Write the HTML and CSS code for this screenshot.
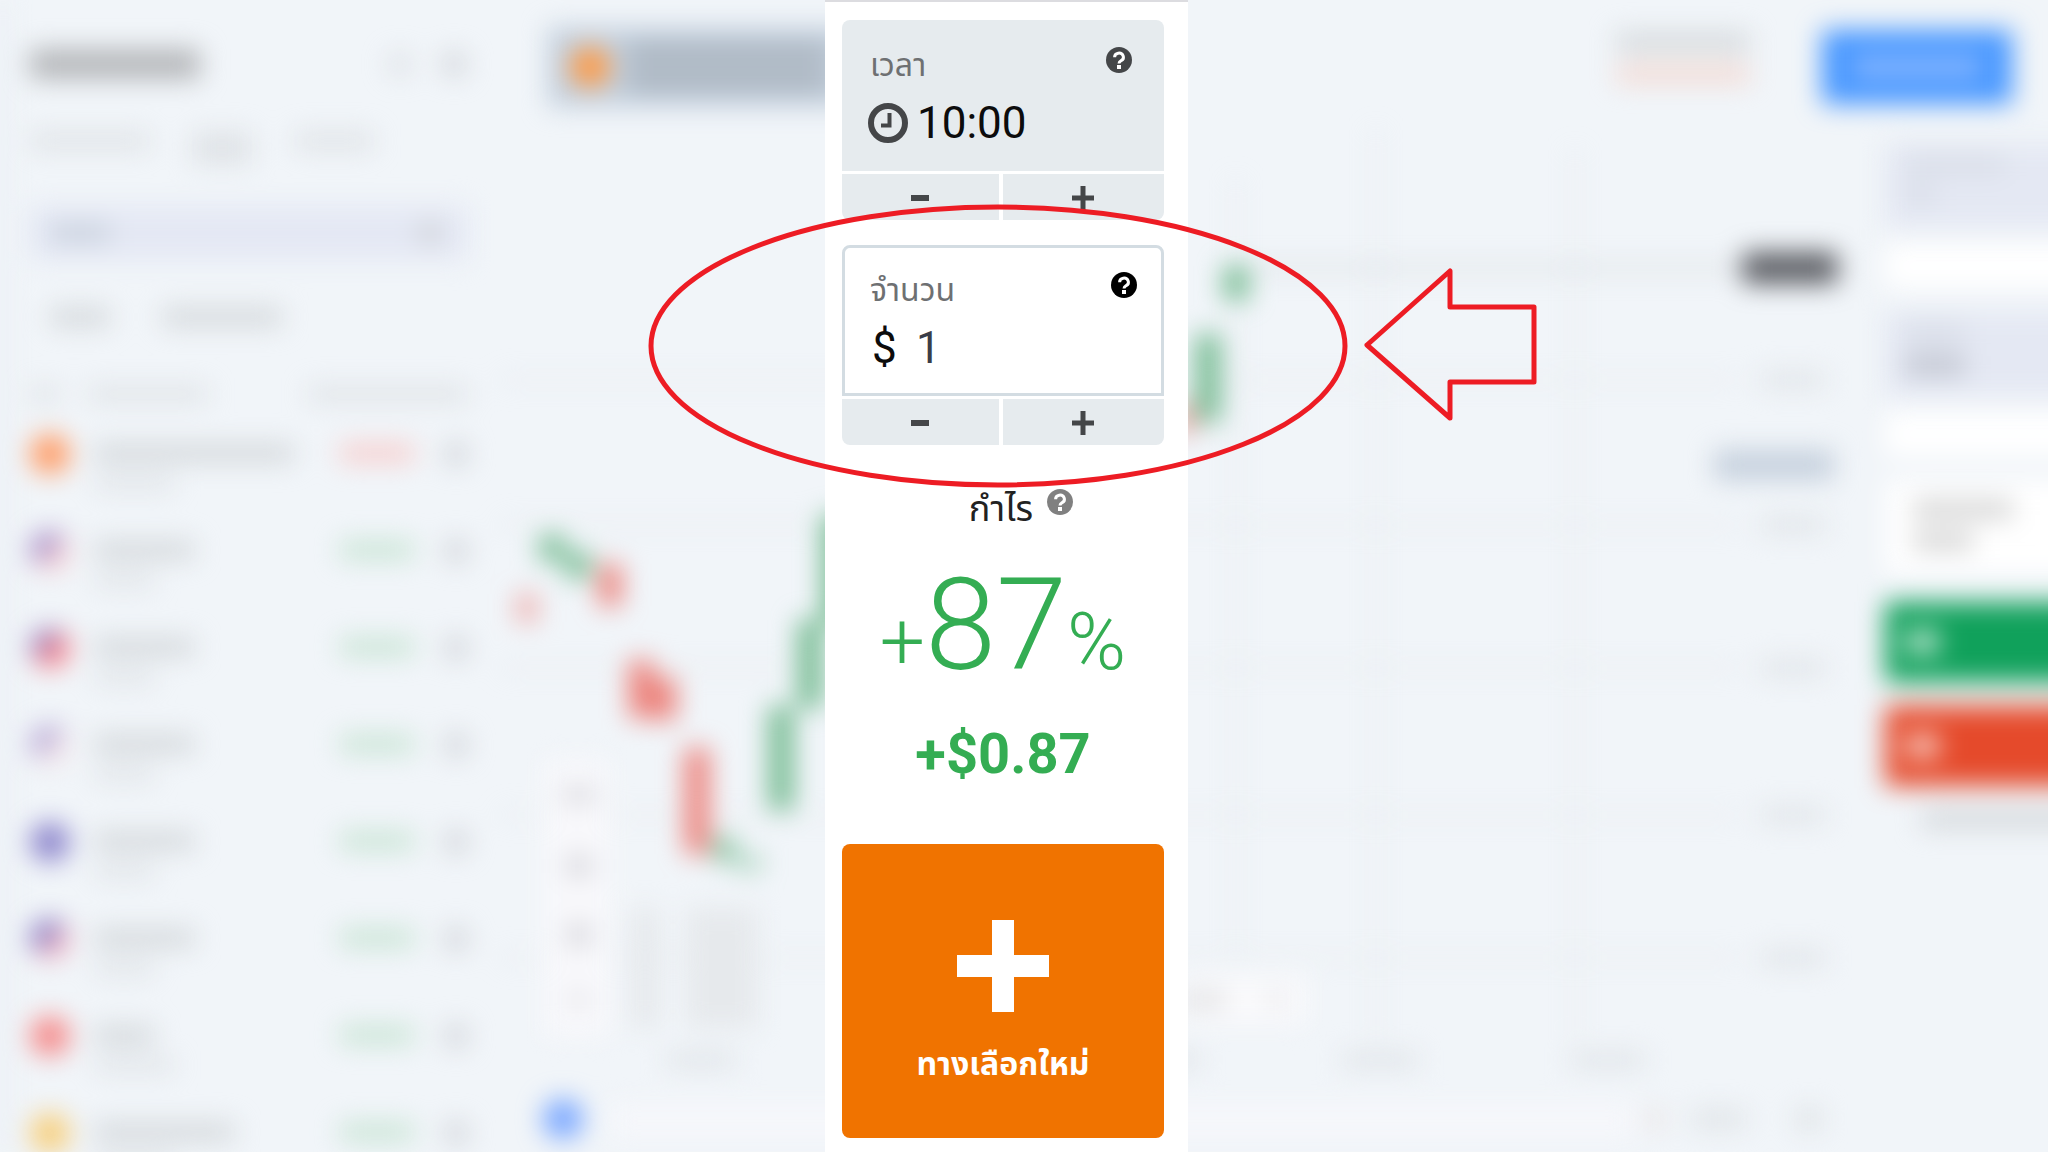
FILE: index.html
```html
<!DOCTYPE html>
<html lang="th">
<head>
  <meta charset="UTF-8" />
  <meta name="viewport" content="width=device-width, initial-scale=1.0" />
  <title>จำนวน</title>
  <link rel="stylesheet" href="styles.css">
</head>
<body>

  <svg class="defs" aria-hidden="true">
    <symbol id="help" viewBox="0 0 26 26">
      <circle cx="13" cy="13" r="13" fill="currentColor" />
      <path class="help-mark" d="M8.6 10.2a4.400 4 0 1 1 6.600 3.400c-1.600 1-2.200 1.500-2.200 3" />
      <rect class="help-dot" x="11" y="18" width="4" height="4" />
    </symbol>
    <symbol id="minus" viewBox="0 0 24 24"><path d="M3 12h18" stroke="currentColor" stroke-width="6" /></symbol>
    <symbol id="plus" viewBox="0 0 24 24"><path d="M1 12h22M12 0v24" stroke="currentColor" stroke-width="5" /></symbol>
  </svg>

  <!-- blurred trading screen behind the panel -->
  <div class="backdrop" aria-hidden="true">
    <div class="screen">
      <div class="sidebar">
        <div class="side-head"><i class="bar title"></i><i class="dot faint"></i><i class="dot"></i></div>
        <div class="side-tabs"><i class="bar w120"></i><i class="bar w60 active"></i><i class="bar w80"></i></div>
        <div class="search"><i class="bar w60"></i><i class="dot"></i></div>
        <div class="filters"><i class="bar w60"></i><i class="bar w120"></i></div>
        <div class="list-head"><i class="bar w30"></i><i class="bar w120"></i><i class="bar w160"></i></div>
        <div class="row"><i class="coin orange"></i><div class="name"><i class="bar w200"></i><i class="bar small w80"></i></div><i class="bar change down"></i><i class="dot"></i></div>
        <div class="row"><i class="coin us"></i><div class="name"><i class="bar w100"></i><i class="bar small w60"></i></div><i class="bar change"></i><i class="dot"></i></div>
        <div class="row"><i class="coin us-red"></i><div class="name"><i class="bar w100"></i><i class="bar small w60"></i></div><i class="bar change"></i><i class="dot"></i></div>
        <div class="row"><i class="coin pale"></i><div class="name"><i class="bar w100"></i><i class="bar small w60"></i></div><i class="bar change"></i><i class="dot"></i></div>
        <div class="row"><i class="coin navy"></i><div class="name"><i class="bar w100"></i><i class="bar small w60"></i></div><i class="bar change"></i><i class="dot"></i></div>
        <div class="row"><i class="coin mixed"></i><div class="name"><i class="bar w100"></i><i class="bar small w60"></i></div><i class="bar change"></i><i class="dot"></i></div>
        <div class="row"><i class="coin red"></i><div class="name"><i class="bar w60"></i><i class="bar small w80"></i></div><i class="bar change"></i><i class="dot"></i></div>
        <div class="row"><i class="coin gold"></i><div class="name"><i class="bar w140"></i><i class="bar small w80"></i></div><i class="bar change"></i><i class="dot"></i></div>
      </div>

      <div class="main">
        <div class="topbar">
          <div class="asset-tab"><i class="coin"></i><div class="name"><i class="bar"></i><i class="bar"></i></div></div>
          <div class="account"><i class="bar"></i><i class="bar warn"></i></div>
          <div class="deposit"><i class="bar"></i></div>
        </div>
        <div class="work">
          <svg class="chart" viewBox="500 116 1385 1036" preserveAspectRatio="xMinYMin slice">
            <g stroke="#e3e7ea" stroke-width="3">
              <path d="M1236 180V960M1376 130V1040M1575 150V1040" />
              <path d="M500 380H1740M500 525H1740M500 668H1740M500 815H1740M500 958H1740" />
              <path d="M1250 268H1740" stroke="#c9cdd0" stroke-width="4" />
            </g>
            <g fill="#ec7f78">
              <rect x="517" y="594" width="20" height="28" opacity=".6" />
              <rect x="599" y="564" width="22" height="42" />
              <rect x="629" y="660" width="24" height="58" />
              <rect x="654" y="678" width="22" height="42" />
              <rect x="685" y="748" width="24" height="106" />
              <rect x="1180" y="404" width="12" height="30" />
            </g>
            <g fill="#71b98e">
              <rect x="540" y="535" width="24" height="26" />
              <rect x="566" y="552" width="24" height="26" />
              <rect x="714" y="838" width="20" height="22" />
              <rect x="736" y="856" width="26" height="14" opacity=".6" />
              <rect x="769" y="706" width="24" height="104" />
              <rect x="798" y="620" width="24" height="88" />
              <rect x="822" y="515" width="26" height="110" />
              <rect x="1196" y="334" width="24" height="88" />
              <rect x="1224" y="266" width="24" height="34" />
            </g>
            <rect x="1742" y="252" width="96" height="32" rx="6" fill="#5c5e64" />
            <rect x="1714" y="450" width="120" height="30" fill="#c5d0dd" />
            <g fill="#e0e4e8">
              <rect x="1760" y="372" width="66" height="16" />
              <rect x="1760" y="517" width="66" height="16" />
              <rect x="1760" y="660" width="66" height="16" />
              <rect x="1760" y="807" width="66" height="16" />
              <rect x="1760" y="950" width="66" height="16" />
              <rect x="666" y="1052" width="70" height="16" />
              <rect x="1160" y="1052" width="40" height="16" />
              <rect x="1342" y="1052" width="76" height="16" />
              <rect x="1570" y="1052" width="76" height="16" />
            </g>
            <rect x="544" y="760" width="66" height="276" fill="#f8f8fb" />
            <g fill="#d6d6dc">
              <rect x="562" y="788" width="34" height="14" />
              <rect x="566" y="856" width="26" height="20" />
              <rect x="567" y="924" width="24" height="22" />
              <rect x="568" y="994" width="22" height="12" opacity=".7" />
            </g>
            <g fill="#e6e9ec">
              <rect x="630" y="908" width="30" height="120" />
              <rect x="686" y="908" width="72" height="120" />
            </g>
            <rect x="1180" y="974" width="126" height="50" fill="#fafafc" />
            <rect x="1180" y="992" width="46" height="16" fill="#dfdfe1" />
            <rect x="1266" y="990" width="20" height="18" fill="#e9e9eb" />
            <rect x="610" y="1104" width="1026" height="34" fill="#f6f7fb" />
            <circle cx="563" cy="1119" r="20" fill="#78a6ff" />
            <g fill="#dfe3e6">
              <rect x="1646" y="1110" width="18" height="18" fill="#e9e2e2" />
              <rect x="1692" y="1110" width="54" height="18" />
              <rect x="1796" y="1108" width="26" height="22" />
            </g>
          </svg>
          <div class="order">
            <div class="field"><i class="bar w100"></i><i class="bar w30"></i></div>
            <div class="steps"></div>
            <div class="field"><i class="bar w60"></i><i class="bar dark w60"></i></div>
            <div class="steps"></div>
            <div class="payout"><i class="bar w100"></i><i class="bar w60"></i></div>
            <div class="trade up"><i></i></div>
            <div class="trade sell"><i></i></div>
            <div class="note"><i class="bar w200"></i></div>
          </div>
        </div>
      </div>
    </div>
  </div>

  <div class="stage">
    <main class="panel">
      <section class="box">
        <div class="value time">
          <div class="label-row">
            <span class="label">เวลา</span>
            <button class="help" aria-label="ช่วยเหลือ เวลา"><svg><use href="#help" /></svg></button>
          </div>
          <div class="figure">
            <svg class="clock" viewBox="0 0 40 40" aria-hidden="true">
              <circle cx="20" cy="20" r="17" fill="none" stroke="currentColor" stroke-width="6" />
              <path d="M21.500 10v12.500H13" fill="none" stroke="currentColor" stroke-width="4" />
            </svg>
            <span>10:00</span>
          </div>
        </div>
        <div class="buttons">
          <button aria-label="ลดเวลา"><svg><use href="#minus" /></svg></button>
          <button aria-label="เพิ่มเวลา"><svg><use href="#plus" /></svg></button>
        </div>
      </section>

      <section class="box">
        <div class="value amount">
          <div class="label-row">
            <label class="label" for="amount">จำนวน</label>
            <button class="help" aria-label="ช่วยเหลือ จำนวน"><svg><use href="#help" /></svg></button>
          </div>
          <div class="figure">
            <span class="currency">$</span>
            <input id="amount" type="text" value="1">
          </div>
        </div>
        <div class="buttons">
          <button aria-label="ลดจำนวน"><svg><use href="#minus" /></svg></button>
          <button aria-label="เพิ่มจำนวน"><svg><use href="#plus" /></svg></button>
        </div>
      </section>

      <section class="profit">
        <div class="profit-label">
          <span>กำไร</span>
          <button class="help" aria-label="ช่วยเหลือ กำไร"><svg><use href="#help" /></svg></button>
        </div>
        <div class="percent"><small>+</small>87<small>%</small></div>
        <div class="gain">+$0.87</div>
      </section>

      <button class="new-option">
        <svg viewBox="0 0 92 92" aria-hidden="true"><path d="M0 46h92M46 0v92" stroke="#fff" stroke-width="22" /></svg>
        <span>ทางเลือกใหม่</span>
      </button>
    </main>
  </div>

  <!-- red marker around the amount box -->
  <svg class="marker" viewBox="0 0 2048 1152" preserveAspectRatio="xMidYMin meet" aria-hidden="true">
    <ellipse cx="998" cy="346" rx="347" ry="139" />
    <path d="M1367 345L1450 271V307H1534V382H1450V418Z" />
  </svg>

</body>
</html>
```

FILE: styles.css
```css
* {
  box-sizing: border-box;
}

body {
  margin: 0;
  position: relative;
  min-height: 100vh;
  background: #f1f5f9;
  font-family: Roboto, "Noto Sans Thai", "Noto Sans", sans-serif;
  overflow-x: hidden;
}

button {
  border: none;
  padding: 0;
  font-family: inherit;
  cursor: pointer;
}

.defs {
  position: absolute;
  width: 0;
  height: 0;
}

/* backdrop */
.backdrop {
  position: absolute;
  inset: 0;
  overflow: hidden;
}

/* wider than the window so the blur does not fade at the right edge */
.screen {
  display: flex;
  width: calc(100% + 60px);
  height: 100%;
  filter: blur(13px);
}

.bar {
  display: block;
  height: 18px;
  background: #d3d7da;
}

.dot {
  width: 24px;
  height: 24px;
  border-radius: 50%;
  background: #d0d3d8;
}

.faint {
  opacity: 0.6;
}

.w30 { width: 30px; }
.w60 { width: 60px; }
.w80 { width: 80px; }
.w100 { width: 100px; }
.w120 { width: 120px; }
.w140 { width: 140px; }
.w160 { width: 160px; }
.w200 { width: 200px; }

.sidebar {
  width: 500px;
  flex-shrink: 0;
  padding: 44px 32px 0 30px;
  border-left: 6px solid #e6e9f1;
}

.side-head {
  display: flex;
  align-items: center;
  gap: 28px;
  height: 40px;
}

.side-head .title {
  width: 170px;
  height: 30px;
  margin-right: auto;
  background: #b4b6b9;
}

.side-head .dot {
  margin-right: 2px;
}

.sidebar > div {
  margin-left: -6px;
}

.side-tabs {
  display: flex;
  gap: 42px;
  height: 50px;
  margin-top: 48px;
}

.side-tabs .bar {
  opacity: 0.6;
}

.side-tabs .active {
  height: 32px;
}

.search {
  display: flex;
  justify-content: space-between;
  align-items: center;
  height: 54px;
  margin-top: 24px;
  padding: 0 26px 0 20px;
  background: #e4e8f4;
}

.search .bar {
  background: #c9d1dd;
}

.filters {
  display: flex;
  gap: 52px;
  padding: 48px 20px 0;
}

.list-head {
  display: flex;
  gap: 28px;
  padding-top: 60px;
}

.list-head .bar {
  height: 16px;
  opacity: 0.6;
}

.list-head .w160 {
  margin-left: auto;
}

.row {
  display: flex;
  align-items: flex-start;
  height: 97px;
  padding-top: 32px;
}

.coin {
  width: 40px;
  height: 40px;
  border-radius: 50%;
}

.coin.orange { background: #ff9c66; }
.coin.us { background: linear-gradient(135deg, #a68fc9 45%, #f5cdd2 55%); }
.coin.us-red { background: linear-gradient(135deg, #9c84c0 40%, #f7838b 50%); }
.coin.pale { background: linear-gradient(135deg, #b6a8d6 45%, #f3e4e8 55%); }
.coin.navy { background: #8d86cc; }
.coin.mixed { background: linear-gradient(135deg, #887dc4 45%, #eeb0c0 55%); }
.coin.red { background: #f58a8a; }
.coin.gold { background: #f7cf7c; }

.row .name {
  margin: 10px auto 0 24px;
}

.row .small {
  height: 14px;
  margin-top: 14px;
  opacity: 0.6;
}

.row .change {
  width: 74px;
  margin: 10px 30px 0 0;
  background: #c7e4d3;
}

.row .down {
  background: #f8cccb;
}

.row .dot {
  margin: 8px 0 0;
}

.main {
  flex: 1;
  display: flex;
  flex-direction: column;
}

.topbar {
  display: flex;
  align-items: center;
  height: 116px;
  padding: 18px 96px 0 48px;
}

.asset-tab {
  display: flex;
  align-items: center;
  gap: 18px;
  width: 400px;
  height: 80px;
  padding: 0 22px;
  background: #c3d0de;
}

.asset-tab .coin {
  background: #ff9a44;
}

.asset-tab .bar {
  width: 200px;
  margin: 10px 0;
  background: #a7b0ba;
}

.account {
  margin: -4px 72px 0 auto;
}

.account .bar {
  width: 134px;
  margin-bottom: 14px;
}

.account .warn {
  background: #f3d9d2;
}

.deposit {
  display: flex;
  align-items: center;
  justify-content: center;
  width: 190px;
  height: 74px;
  background: #4596ff;
}

.deposit .bar {
  width: 130px;
  background: #94bdff;
}

.work {
  flex: 1;
  display: flex;
  min-height: 0;
}

.chart {
  flex: 1;
  min-width: 0;
  height: 100%;
}

.order {
  width: 223px;
  padding-top: 28px;
}

.order .field {
  height: 84px;
  padding: 12px 20px;
  background: #e4e8f3;
}

.order .field .bar {
  height: 16px;
  margin-bottom: 14px;
  background: #d7dce6;
}

.order .field .dark {
  height: 22px;
  background: #c3c7d2;
}

.order .steps {
  height: 44px;
  margin: 16px 0 24px;
  background: #fff;
}

.order .payout {
  height: 94px;
  margin-bottom: 28px;
  padding: 20px 28px;
  background: #fff;
}

.order .payout .bar {
  margin-bottom: 14px;
  background: #d2d2d2;
}

.order .trade {
  display: flex;
  align-items: center;
  height: 80px;
  margin-bottom: 24px;
  padding-left: 20px;
}

.trade i {
  width: 34px;
  height: 24px;
  background: #fff;
  opacity: 0.7;
}

.trade.up { background: #10a15b; }
.trade.sell { background: #e54a2b; }

.note {
  padding-left: 36px;
}

/* panel */
.stage {
  position: relative;
  display: grid;
  grid-template-columns: 825fr 363px 860fr;
  min-height: 100vh;
}

.panel {
  grid-column: 2;
  padding: 18px 24px 12px 17px;
  border-top: 2px solid #dcdce0;
  background: #fff;
}

.box {
  margin-bottom: 25px;
}

.value {
  height: 151px;
  padding: 27px 32px 0 28px;
  border-radius: 8px 8px 0 0;
  background: #e6ebee;
}

.amount {
  padding: 24px 24px 0 25px;
  border: 3px solid #d3dce2;
  background: #fff;
}

.label-row {
  display: flex;
  justify-content: space-between;
  align-items: flex-start;
  height: 49px;
}

.label {
  color: #6e7072;
  font-size: 32px;
  line-height: 36px;
}

.help {
  width: 26px;
  height: 26px;
  background: none;
  color: #444648;
}

.help svg {
  display: block;
  width: 26px;
  height: 26px;
}

.amount .help {
  color: #000;
}

.help-mark {
  fill: none;
  stroke: #fff;
  stroke-width: 3;
}

.help-dot {
  fill: #fff;
}

.figure {
  display: flex;
  align-items: center;
  height: 54px;
  font-size: 44px;
  line-height: 54px;
  color: #0c0c0c;
}

.clock {
  width: 40px;
  height: 40px;
  margin: 0 9px 0 -2px;
  color: #444648;
}

.currency {
  width: 46px;
  padding-left: 2px;
}

#amount {
  width: 180px;
  height: 54px;
  padding: 0;
  border: none;
  background: none;
  font: inherit;
  color: #3a3d48;
}

.buttons {
  display: grid;
  grid-template-columns: 157px 1fr;
  gap: 4px;
  margin-top: 3px;
}

.buttons button {
  display: flex;
  align-items: center;
  justify-content: center;
  height: 46px;
  padding: 2px 2px 0 0;
  background: #e6ebee;
  color: #444648;
}

.buttons button:first-child {
  border-radius: 0 0 0 8px;
}

.buttons button:last-child {
  border-radius: 0 0 8px 0;
}

.buttons svg {
  width: 24px;
  height: 24px;
}

.profit {
  color: #34ad53;
  text-align: center;
}

.profit-label {
  display: flex;
  justify-content: center;
  gap: 14px;
  height: 75px;
  padding: 19px 0 0 36px;
  font-size: 36px;
  line-height: 40px;
  color: #222;
}

.profit-label .help {
  color: #808080;
}

.percent {
  height: 160px;
  font-size: 128px;
  font-weight: 300;
  line-height: 160px;
  white-space: nowrap;
}

.percent small {
  font-size: 80px;
}

.gain {
  margin-top: 17px;
  font-size: 56px;
  font-weight: 700;
  line-height: 64px;
}

.new-option {
  display: flex;
  flex-direction: column;
  align-items: center;
  width: 100%;
  height: 294px;
  margin-top: 58px;
  padding-top: 76px;
  border-radius: 8px;
  background: #f07300;
  color: #fff;
  font-size: 32px;
  font-weight: 700;
  line-height: 40px;
}

.new-option svg {
  width: 92px;
  height: 92px;
  margin-bottom: 32px;
}

/* annotation */
.marker {
  position: absolute;
  top: 0;
  left: 0;
  width: 100%;
  pointer-events: none;
  fill: none;
  stroke: #ed1c24;
  stroke-width: 5;
  stroke-linejoin: round;
}
```
